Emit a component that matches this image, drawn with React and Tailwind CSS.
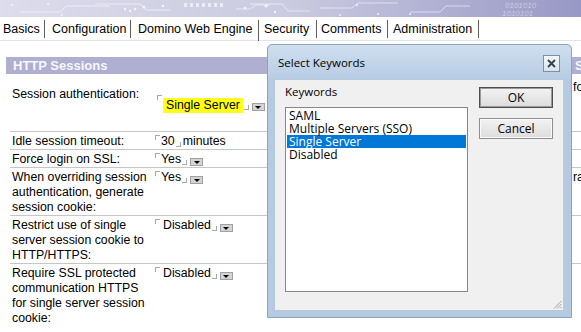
import React from 'react';

const tabs = [
  { name: 'Basics', cls: 'w-[45px] pl-[3px]' },
  { name: 'Configuration', cls: 'w-[86px] pl-[7px]' },
  { name: 'Domino Web Engine', cls: 'w-[128px] pl-[7px]', active: true },
  { name: 'Security', cls: 'w-[58px] pl-[5px]' },
  { name: 'Comments', cls: 'w-[71px] pl-[4px]' },
  { name: 'Administration', cls: 'w-[91px] pl-[5px]' },
];

const rows = [
  { label: ['Session authentication:'], value: 'Single Server', highlight: true, drop: true, right: 'fo', first: true },
  { label: ['Idle session timeout:'], value: '30', suffix: 'minutes' },
  { label: ['Force login on SSL:'], value: 'Yes', drop: true },
  { label: ['When overriding session', 'authentication, generate', 'session cookie:'], value: 'Yes', drop: true, right: 'ra' },
  { label: ['Restrict use of single', 'server session cookie to', 'HTTP/HTTPS:'], value: 'Disabled', drop: true },
  { label: ['Require SSL protected', 'communication HTTPS', 'for single server session', 'cookie:'], value: 'Disabled', drop: true },
];

const keywords = ['SAML', 'Multiple Servers (SSO)', 'Single Server', 'Disabled'];

// little field corner marks that Notes draws round an editable field
const StartMark = ({ high }) => (
  <span className={`${high ? 'mt-[-2px] ml-[2px]' : 'mt-[1px]'} mr-[1px] h-[5px] w-[5px] shrink-0 border-l border-t border-[#a9a9a9]`} />
);
const EndMark = () => <span className="mt-[8px] ml-[1px] h-[5px] w-[5px] shrink-0 border-r border-b border-[#a9a9a9]" />;
const DropButton = () => (
  <span className="mt-[6px] ml-[3px] flex h-[8px] w-[13px] shrink-0 items-center justify-center border border-[#a0a0a0] bg-[#d4d4d4]">
    <span className="h-0 w-0 border-x-[3px] border-t-[3px] border-x-transparent border-t-black" />
  </span>
);

const Banner = () => (
  <div className="h-[17px] bg-linear-to-r from-[#dcdcec] via-[#cacae0] to-[#9898c6]">
    <svg width="581" height="17" viewBox="0 0 581 17" className="block">
      <g stroke="#ffffff" strokeOpacity="0.55" fill="none" strokeWidth="1">
        <path d="M20 12 H60 L66 6 H110" />
        <path d="M95 4 H140 L146 10 H170" />
        <path d="M236 9 H250 L256 5 H270" />
        <path d="M250 4 H282 L288 11 H310" />
        <path d="M320 8 H352 L358 3 H398" />
        <path d="M410 12 H440 L446 6 H470" />
      </g>
      <g fill="#ffffff" fillOpacity="0.75">
        <circle cx="12" cy="5" r="1" />
        <circle cx="48" cy="4" r="1" />
        <circle cx="62" cy="15" r="1" />
        <circle cx="125" cy="9" r="1.2" />
        <circle cx="130" cy="11" r="1.2" />
        <circle cx="135" cy="9" r="1.2" />
        <circle cx="144" cy="7" r="1.5" />
        <circle cx="163" cy="6" r="1.2" />
        <circle cx="245" cy="8" r="1.2" />
        <circle cx="266" cy="6" r="1.5" />
        <circle cx="275" cy="12" r="1.2" />
        <circle cx="340" cy="15" r="1" />
        <circle cx="357" cy="5" r="1" />
        <circle cx="378" cy="14" r="1" />
        <circle cx="410" cy="14" r="1" />
      </g>
      <g fill="#ffffff" fillOpacity="0.6">
        <rect x="184" y="3" width="3" height="4" />
        <rect x="190" y="3" width="3" height="4" />
        <rect x="196" y="3" width="3" height="4" />
        <rect x="202" y="3" width="3" height="4" />
        <rect x="208" y="3" width="3" height="4" />
        <rect x="214" y="3" width="3" height="4" />
        <rect x="220" y="3" width="3" height="4" />
      </g>
      <g fill="#ffffff" fillOpacity="0.45" fontFamily="Liberation Sans, Arial, sans-serif" fontStyle="italic" fontSize="8">
        <text x="505" y="8">0101010</text>
        <text x="502" y="16">1010101</text>
      </g>
    </svg>
  </div>
);

const Dialog = () => (
  <div className="absolute left-[267px] top-[44px] flex h-[274px] w-[305px] flex-col rounded-t-[5px] border border-[#8ba3c1] bg-[#b5c9e1] font-['Open_Sans',sans-serif] text-[11.5px]">
    <div className="flex h-[35px] items-center justify-between rounded-t-[5px] bg-linear-to-b from-[#cfdeef] to-[#b7cce4] pl-[10px] pr-[11px]">
      <span className="text-[11.5px] text-black">Select Keywords</span>
      <span className="mt-[2px] flex h-[17px] w-[17px] items-center justify-center border border-[#7d8fa5] bg-linear-to-b from-[#f2f6fa] to-[#d9e3ee]">
        <svg width="9" height="9" viewBox="0 0 9 9">
          <path d="M1 1 L8 8 M8 1 L1 8" stroke="#34404e" strokeWidth="1.8" />
        </svg>
      </span>
    </div>
    <div className="relative ml-[7px] mr-[8px] flex h-[230px] bg-[#f0f0f0] pl-[10px] pt-[5px]">
      <div className="w-[183px]">
        <div className="leading-[14px]">Keywords</div>
        <div className="mt-[8px] h-[185px] border border-[#828790] bg-white p-[1px]">
          {keywords.map((k) => (
            <div
              key={k}
              className={`h-[13px] pl-[2px] text-[12px] leading-[13px] whitespace-nowrap ${k === 'Single Server' ? 'bg-[#0078d7] text-white' : 'text-black'}`}
            >
              {k}
            </div>
          ))}
        </div>
      </div>
      <div className="ml-[11px] mt-[2px] flex flex-col gap-[10px]">
        <button className="h-[21px] w-[74px] border border-[#4f4f4f] bg-linear-to-b from-[#f3f3f3] to-[#dcdcdc] text-[12px] leading-[19px] shadow-[inset_0_0_0_1px_#9a9a9a]">
          OK
        </button>
        <button className="h-[21px] w-[74px] border border-[#8e8e8e] bg-linear-to-b from-[#f3f3f3] to-[#dcdcdc] text-[12px] leading-[19px] shadow-[inset_0_0_0_1px_#fafafa]">
          Cancel
        </button>
      </div>
      <svg width="9" height="9" viewBox="0 0 9 9" className="absolute bottom-[1px] right-[1px]">
        <g stroke="#a0a0a0" strokeWidth="1">
          <path d="M8.5 1 L1 8.5" />
          <path d="M8.5 4 L4 8.5" />
          <path d="M8.5 7 L7 8.5" />
        </g>
      </svg>
    </div>
  </div>
);

export default function App() {
  return (
    <div className="relative h-[332px] w-[581px] overflow-hidden bg-white font-['Liberation_Sans',Arial,sans-serif] text-[12.3px] text-black">
      <Banner />

      {/* Tabs */}
      <div className="mt-[3px] flex h-[21px] items-start border-b border-[#e4e4e4]">
        {tabs.map((t) => (
          <div
            key={t.name}
            className={`${t.cls} ${t.active ? 'h-[21px]' : 'h-[18px]'} shrink-0 whitespace-nowrap border-r border-[#5f5f5f] text-[12.5px] leading-[19px]`}
          >
            {t.name}
          </div>
        ))}
      </div>

      {/* Section header */}
      <div className="ml-[6px] mt-[16px] flex h-[17px] bg-[#afafd1] text-[13px] font-bold leading-[17px] text-[#f7f7fb]">
        <span className="w-[569px] shrink-0 pl-[7px]">HTTP Sessions</span>
        <span>S</span>
      </div>

      {/* Settings table */}
      <div className="ml-[10px]">
        {rows.map((r, i) => (
          <div
            key={i}
            className={`flex border-[#c6c6c6] ${r.first ? 'h-[58px]' : ''} ${i < rows.length - 1 ? 'border-b' : ''}`}
          >
            <div className={`w-[145px] shrink-0 pl-[2px] whitespace-nowrap ${r.first ? 'pt-[13px] leading-[15px]' : 'pt-[2px] leading-[15px]'} ${i === rows.length - 1 ? 'leading-[15.5px]' : ''}`}>
              {r.label.map((l) => (
                <div key={l}>{l}</div>
              ))}
            </div>
            <div className={`flex w-[418px] shrink-0 items-start ${r.first ? 'pt-[23px]' : 'pt-[2px]'}`}>
              <StartMark high={r.highlight} />
              <span
                className={`whitespace-nowrap leading-[15px] ${r.highlight ? 'mt-[1px] bg-[#ffff1a] px-[3px]' : r.value === 'Disabled' ? 'pl-[2px]' : ''}`}
              >
                {r.value}
              </span>
              <EndMark />
              {r.drop && <DropButton />}
              {r.suffix && <span className="ml-[2px] leading-[15px]">{r.suffix}</span>}
            </div>
            <div className={`whitespace-nowrap leading-[15px] ${r.first ? 'pt-[6px]' : 'pt-[2px]'}`}>{r.right}</div>
          </div>
        ))}
      </div>

      <Dialog />
    </div>
  );
}
